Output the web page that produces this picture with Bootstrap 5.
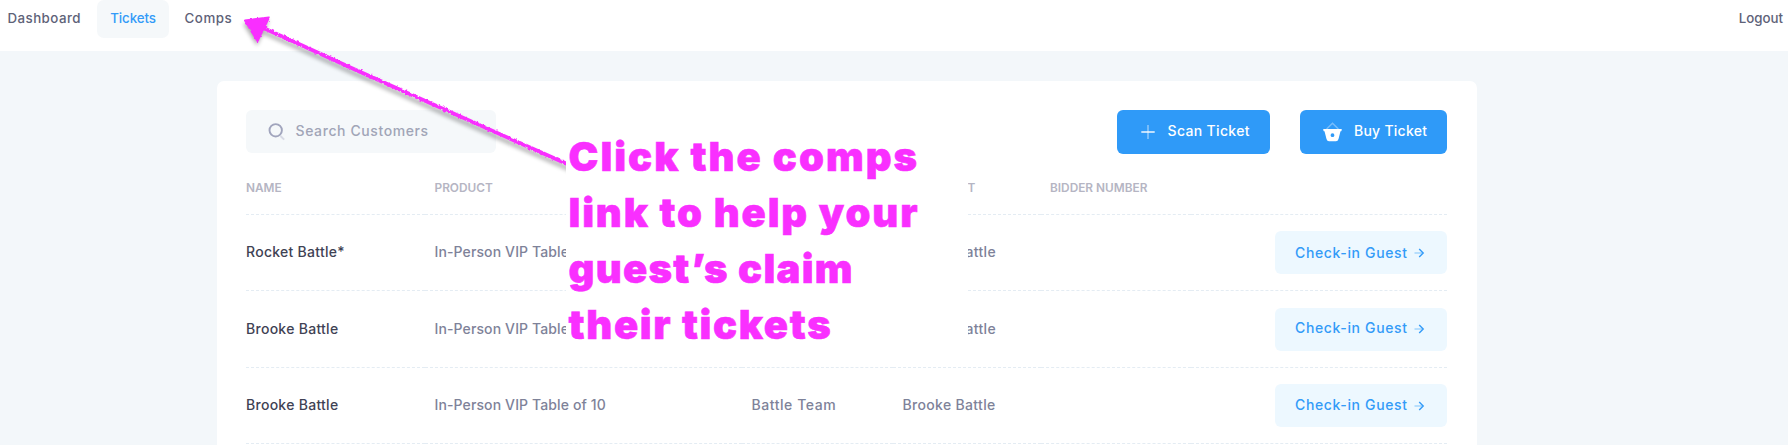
<!DOCTYPE html>
<html lang="en">
<head>
<meta charset="utf-8">
<meta name="viewport" content="width=device-width, initial-scale=1">
<title>Tickets</title>
<link href="https://cdn.jsdelivr.net/npm/bootstrap@5.3.0/dist/css/bootstrap.min.css" rel="stylesheet">
<style>
body{background:#f3f7fa;font-family:Inter,"Open Sans",sans-serif;font-size:14px;font-weight:500;color:#7e8299;height:445px;overflow:hidden;position:relative}
.topbar{height:51px;background:#fff;font-size:13.3px}
.topbar a{color:#5e6278;text-decoration:none;height:37px;line-height:36px;border-radius:7px;white-space:nowrap}
.topbar a.current{background:#f5f8fa;color:#339bf8;width:72px;height:38px;text-align:center}
.panel{width:1260px;height:364px;margin:30px 0 0 217px;padding:29px 30px 0 29px;background:#fff;border-radius:7px 7px 0 0}
.finder{width:250px;height:43px;background:#f5f8fa;border-radius:6px;color:#a1a5b7;letter-spacing:.6px}
.action{height:44px;background:#2f9af8;color:#fff;border-radius:6px;font-size:14px;font-weight:500;padding:0;border:0}
.action:hover{background:#1f8ae8;color:#fff}
.guests{table-layout:fixed;width:1201px;margin:8px 0 0;color:inherit;border-collapse:separate;border-spacing:0}
.guests th,.guests td{padding:0 0 0 9.5px;border:0;border-bottom:1px dashed #e4ecf3;vertical-align:middle;white-space:nowrap;color:#7e8299;background:none;box-shadow:none}
.guests th:first-child,.guests td:first-child{padding-left:0}
.guests th{height:53px;font-size:11.85px;font-weight:600;color:#b5b5c3;padding-top:2px}
.guests td{height:76px;padding-bottom:2px}
.guests tr.tall td{height:77px}
.guests td.who{color:#3f4254;letter-spacing:.28px}
.guests td.act{padding-bottom:0}
.checkin{width:172px;height:43px;background:#edf8ff;color:#339bf8;border-radius:6px;font-size:14px;font-weight:500;letter-spacing:.64px;padding:0;border:0}
.ls-team{letter-spacing:.55px}
.ls-host{letter-spacing:.33px}
.ls-item{letter-spacing:.12px}
.note{position:absolute;left:566px;top:129px;width:402px;height:233px;background:#fff;color:#f92fff;font-weight:900;font-size:40px;line-height:56px;padding-left:2.5px;white-space:nowrap;-webkit-text-stroke:.6px #f92fff}
.pointer{position:absolute;left:0;top:0;pointer-events:none}
</style>
<script src="https://cdn.jsdelivr.net/npm/bootstrap@5.3.0/dist/js/bootstrap.bundle.min.js"></script>
</head>
<body>
<nav class="topbar d-flex align-items-start">
  <a href="#" style="letter-spacing:.45px;margin-left:7.5px;width:89.5px">Dashboard</a>
  <a href="#" class="current" style="letter-spacing:-.1px">Tickets</a>
  <a href="#" style="letter-spacing:.55px;margin-left:15.5px">Comps</a>
  <a href="#" class="ms-auto" style="margin-right:5px">Logout</a>
</nav>

<main class="panel">
  <div class="d-flex align-items-start">
    <div class="finder d-flex align-items-center">
      <svg width="18" height="18" viewBox="0 0 18 18" fill="none" style="margin-left:22px;margin-right:9.5px"><path d="M12.500 13l3.700 3.600" stroke="#d8dae5" stroke-width="2"/><circle cx="7.700" cy="7.300" r="6.200" stroke="#a1a5bd" stroke-width="1.900"/></svg>
      <span style="margin-top:-2px">Search Customers</span>
    </div>
    <button class="btn action d-flex align-items-center ms-auto" style="width:153px;letter-spacing:.34px">
      <svg width="14" height="14" viewBox="0 0 14 14" style="margin-left:23.500px;margin-right:13px"><path d="M7 0v14" stroke="#97ccfb" stroke-width="1.4"/><path d="M.3 7h13.4" stroke="#fff" stroke-width="1.4"/></svg>
      <span style="margin-top:-3px">Scan Ticket</span>
    </button>
    <button class="btn action d-flex align-items-center" style="width:147px;margin-left:30px;letter-spacing:.25px">
      <svg width="19" height="20" viewBox="0 0 19 20" style="margin-left:23px;margin-right:12px;margin-top:-1px"><path d="M3.600 7L9.500 1.200 15.400 7" fill="none" stroke="#78bdfb" stroke-width="1.5"/><path fill="#fff" fill-rule="evenodd" d="M.8 7h17.400q.8.1.6.9L18.200 9.300h-.7L15.500 17q-.6 2.200-2.500 2.200H6Q4.100 19.200 3.500 17L1.500 9.300H.8L.2 7.900Q0 7.100.8 7zM9.500 11.300a1.900 1.900 0 1 0 0 3.800 1.900 1.900 0 0 0 0-3.800z"/></svg>
      <span style="margin-top:-4px">Buy Ticket</span>
    </button>
  </div>

  <table class="table guests">
    <colgroup><col style="width:179px"><col style="width:317px"><col style="width:151px"><col style="width:147.500px"><col style="width:150px"><col></colgroup>
    <thead>
      <tr><th>NAME</th><th>PRODUCT</th><th></th><th><span style="margin-left:65px">T</span></th><th>BIDDER NUMBER</th><th></th></tr>
    </thead>
    <tbody>
      <tr>
        <td class="who">Rocket Battle*</td><td class="ls-item">In-Person VIP Table</td><td></td><td class="ls-host"><span style="margin-left:63px">attle</span></td><td></td>
        <td class="act"><button class="btn checkin d-flex align-items-center ms-auto"><span style="margin:-1px 6px 0 20px">Check-in Guest</span><svg width="11" height="10" viewBox="0 0 11 10" fill="none"><path d="M.5 5h8" stroke="#98cffc" stroke-width="1.3"/><path d="M5.200 1l4 4-4 4" stroke="#339bf8" stroke-width="1.4"/></svg></button></td>
      </tr>
      <tr class="tall">
        <td class="who">Brooke Battle</td><td class="ls-item">In-Person VIP Table</td><td></td><td class="ls-host"><span style="margin-left:63px">attle</span></td><td></td>
        <td class="act"><button class="btn checkin d-flex align-items-center ms-auto"><span style="margin:-3px 6px 0 20px">Check-in Guest</span><svg width="11" height="10" viewBox="0 0 11 10" fill="none"><path d="M.5 5h8" stroke="#98cffc" stroke-width="1.3"/><path d="M5.200 1l4 4-4 4" stroke="#339bf8" stroke-width="1.4"/></svg></button></td>
      </tr>
      <tr>
        <td class="who">Brooke Battle</td><td class="ls-item">In-Person VIP Table of 10</td><td class="ls-team">Battle Team</td><td class="ls-host">Brooke Battle</td><td></td>
        <td class="act"><button class="btn checkin d-flex align-items-center ms-auto"><span style="margin:-2px 6px 0 20px">Check-in Guest</span><svg width="11" height="10" viewBox="0 0 11 10" fill="none"><path d="M.5 5h8" stroke="#98cffc" stroke-width="1.3"/><path d="M5.200 1l4 4-4 4" stroke="#339bf8" stroke-width="1.4"/></svg></button></td>
      </tr>
    </tbody>
  </table>
</main>

<!-- Hand-drawn arrow from the note to the Comps link -->
<svg class="pointer" width="566" height="180" viewBox="0 0 566 180">
  <defs>
    <filter id="rough" x="0" y="0" width="566" height="180" filterUnits="userSpaceOnUse"><feTurbulence type="fractalNoise" baseFrequency=".35" numOctaves="2" seed="4" result="n"/><feDisplacementMap in="SourceGraphic" in2="n" scale="3" xChannelSelector="R" yChannelSelector="G"/></filter>
    <filter id="shade" x="0" y="0" width="580" height="190" filterUnits="userSpaceOnUse"><feGaussianBlur stdDeviation="2.2"/></filter>
  </defs>
  <g transform="translate(0 4.500)" filter="url(#shade)" opacity=".33" fill="#000"><path d="M262 27L300 44 357 70 575 167" fill="none" stroke="#000" stroke-width="4"/><path d="M243 19L269 16 257 41z"/></g>
  <g filter="url(#rough)" fill="#f92fff" stroke="#f92fff"><path d="M260 26.500L300 44.500 357 70.500 575 167.500" fill="none" stroke-width="3.800"/><path d="M245 20.500L269 17.500 257.500 41z" stroke-width="2" stroke-linejoin="round"/></g>
</svg>

<aside class="note">
  <div style="letter-spacing:2px">Click the comps</div>
  <div style="letter-spacing:1.85px">link to help your</div>
  <div style="letter-spacing:1.25px">guest’s claim</div>
  <div style="letter-spacing:1.65px">their tickets</div>
</aside>
</body>
</html>
